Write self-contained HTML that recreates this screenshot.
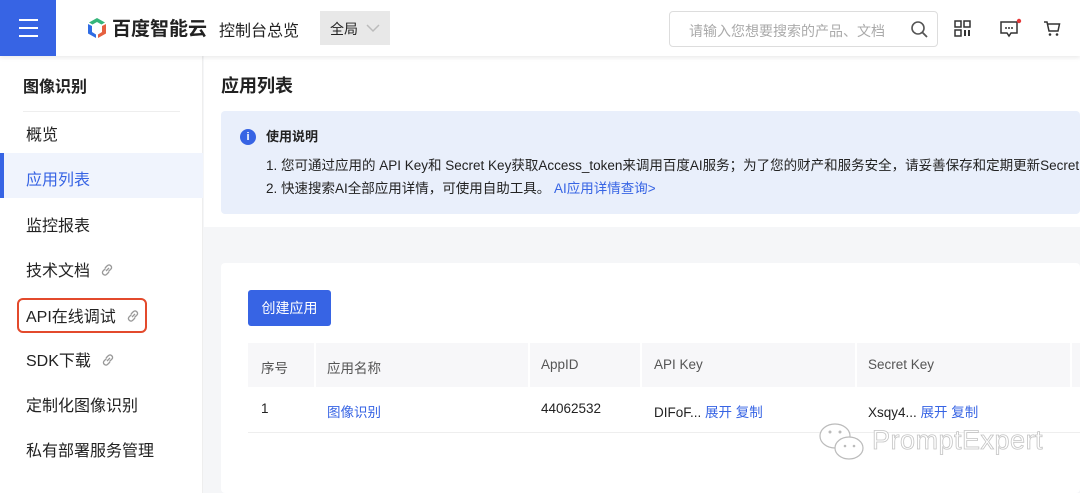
<!DOCTYPE html>
<html><head><meta charset="utf-8"><style>
*{margin:0;padding:0;box-sizing:border-box}
body{width:1080px;height:493px;overflow:hidden;background:#f5f6f8;font-family:"Liberation Sans","Noto Sans CJK SC",sans-serif;color:#222;position:relative}
.abs{position:absolute}
.top{left:0;top:0;width:1080px;height:56px;background:#fff;box-shadow:0 2px 4px rgba(0,0,0,.08);z-index:2}
.burger{left:0;top:0;width:56px;height:56px;background:#3764e4}
.burger i{position:absolute;left:19px;width:19px;height:2px;background:#fff}
.side{left:0;top:56px;width:203px;height:437px;background:#fff;border-right:1px solid #eee}
.side .it{position:absolute;left:26px;font-size:16px;color:#222;white-space:nowrap}
.lk{display:inline-block;margin-left:9px;vertical-align:-2px}
</style></head><body>
<div class="abs top">
 <div class="abs burger"><i style="top:19px"></i><i style="top:27px"></i><i style="top:35px"></i></div>
 <svg class="abs" style="left:85px;top:16px" width="24" height="24" viewBox="0 0 24 24"><path d="M12 2 L20 6.5 L16.5 8.5 L12 6 L7.5 8.5 L4 6.5Z" fill="#35b57a"/><path d="M3 8 L7 10 V16 L11 18.5 V22 L3 17.5Z" fill="#2f6ce4"/><path d="M21 8 L17 10 V16 L13 18.5 V22 L21 17.5Z" fill="#e5603f"/></svg>
 <div class="abs" style="left:112px;top:14px;font-size:19px;font-weight:bold;color:#222">百度智能云</div>
 <div class="abs" style="left:219px;top:17px;font-size:16px;color:#222">控制台总览</div>
 <div class="abs" style="left:320px;top:11px;width:70px;height:34px;background:#e8e8e8"><span class="abs" style="left:10px;top:8px;font-size:14px">全局</span><svg class="abs" style="left:46px;top:12px" width="14" height="10"><path d="M1 2 L7 8 L13 2" stroke="#bbb" fill="none" stroke-width="1.5"/></svg></div>
 <div class="abs" style="left:669px;top:11px;width:269px;height:36px;border:1px solid #ddd;border-radius:4px"><span class="abs" style="left:19px;top:9px;font-size:14px;color:#aaa">请输入您想要搜索的产品、文档</span><svg class="abs" style="left:240px;top:8px" width="20" height="20"><circle cx="8" cy="8" r="6" stroke="#555" fill="none" stroke-width="1.6"/><path d="M12.5 12.5 L17 17" stroke="#555" stroke-width="1.8"/></svg></div>
 <svg class="abs" style="left:954px;top:20px" width="17" height="17"><g fill="none" stroke="#333" stroke-width="1.5"><rect x="1" y="1" width="6" height="6"/><rect x="10" y="1" width="6" height="6"/><rect x="1" y="10" width="6" height="6"/></g><path d="M10 10h2v6h-2zM14 10h2v6h-2z" fill="#333"/></svg>
 <svg class="abs" style="left:999px;top:18px" width="24" height="20"><path d="M2 4 h16 v11 h-6 l-2 3 l-2 -3 h-6z" fill="none" stroke="#333" stroke-width="1.5"/><path d="M6 10h2M9 10h2M12 10h2" stroke="#333" stroke-width="1.4"/><circle cx="20" cy="3" r="2.2" fill="#e5393a"/></svg>
 <svg class="abs" style="left:1043px;top:20px" width="18" height="17"><path d="M1 2 h3 l2 9 h9 l1.5 -7 H5" fill="none" stroke="#333" stroke-width="1.5"/><circle cx="7" cy="14.5" r="1.3" fill="#333"/><circle cx="14" cy="14.5" r="1.3" fill="#333"/></svg>
</div>
<div class="abs side">
 <div class="abs" style="left:23px;top:17px;font-size:16px;font-weight:bold;color:#222">图像识别</div>
 <div class="abs" style="left:23px;top:55px;width:157px;height:1px;background:#eee"></div>
 <div class="it" style="top:65px">概览</div>
 <div class="abs" style="left:0;top:97px;width:203px;height:45px;background:#f0f4fd;border-left:4px solid #3764e4"></div>
 <div class="it" style="top:110px;color:#3764e4">应用列表</div>
 <div class="it" style="top:156px">监控报表</div>
 <div class="it" style="top:201px">技术文档<svg class="lk" width="16" height="16"><g fill="none" stroke="#999" stroke-width="1.3"><path d="M7 9 L10 6"/><path d="M6.5 6.5 L4 9 a2.5 2.5 0 0 0 3.5 3.5 L10 10"/><path d="M9.5 9.5 L12 7 a2.5 2.5 0 0 0 -3.5 -3.5 L6 6"/></g></svg></div>
 <div class="abs" style="left:17px;top:242px;width:130px;height:35px;border:2px solid #e34a2c;border-radius:6px"></div>
 <div class="it" style="top:247px">API在线调试<svg class="lk" width="16" height="16"><g fill="none" stroke="#999" stroke-width="1.3"><path d="M7 9 L10 6"/><path d="M6.5 6.5 L4 9 a2.5 2.5 0 0 0 3.5 3.5 L10 10"/><path d="M9.5 9.5 L12 7 a2.5 2.5 0 0 0 -3.5 -3.5 L6 6"/></g></svg></div>
 <div class="it" style="top:291px">SDK下载<svg class="lk" width="16" height="16"><g fill="none" stroke="#999" stroke-width="1.3"><path d="M7 9 L10 6"/><path d="M6.5 6.5 L4 9 a2.5 2.5 0 0 0 3.5 3.5 L10 10"/><path d="M9.5 9.5 L12 7 a2.5 2.5 0 0 0 -3.5 -3.5 L6 6"/></g></svg></div>
 <div class="it" style="top:336px">定制化图像识别</div>
 <div class="it" style="top:381px">私有部署服务管理</div>
</div>
<div class="abs" style="left:204px;top:56px;width:876px;height:171px;background:#fff"></div>
<div class="abs" style="left:221px;top:72px;font-size:18px;font-weight:bold;color:#222">应用列表</div>
<div class="abs" style="left:221px;top:111px;width:859px;height:103px;background:#e9effb;border-radius:4px">
 <div class="abs" style="left:19px;top:18px;width:16px;height:16px;border-radius:50%;background:#3764e4;color:#fff;font-size:11px;text-align:center;line-height:16px;font-weight:bold">i</div>
 <div class="abs" style="left:45px;top:15px;font-size:13px;font-weight:bold">使用说明</div>
 <div class="abs" style="left:45px;top:43px;font-size:13.5px;white-space:nowrap;color:#222">1. 您可通过应用的 API Key和 Secret Key获取Access_token来调用百度AI服务；为了您的财产和服务安全，请妥善保存和定期更新Secret Key</div>
 <div class="abs" style="left:45px;top:66px;font-size:13.5px;white-space:nowrap;color:#222">2. 快速搜索AI全部应用详情，可使用自助工具。 <span style="color:#3764e4">AI应用详情查询&gt;</span></div>
</div>
<div class="abs" style="left:221px;top:263px;width:859px;height:230px;background:#fff;border-radius:4px"></div>
<div class="abs" style="left:248px;top:290px;width:83px;height:36px;background:#3764e4;border-radius:3px;color:#fff;font-size:14px;text-align:center;line-height:36px">创建应用</div>
<div class="abs" style="left:248px;top:343px;width:832px;height:44px;background:#f7f7f9"></div>
<div class="abs" style="left:314px;top:343px;width:2px;height:44px;background:#fff"></div>
<div class="abs" style="left:528px;top:343px;width:2px;height:44px;background:#fff"></div>
<div class="abs" style="left:640px;top:343px;width:2px;height:44px;background:#fff"></div>
<div class="abs" style="left:855px;top:343px;width:2px;height:44px;background:#fff"></div>
<div class="abs" style="left:1070px;top:343px;width:2px;height:44px;background:#fff"></div>
<div class="abs" style="left:248px;top:432px;width:832px;height:1px;background:#eee"></div>
<div class="abs" style="top:357px;left:261px;font-size:13.5px;color:#555">序号</div>
<div class="abs" style="top:357px;left:327px;font-size:13.5px;color:#555">应用名称</div>
<div class="abs" style="top:357px;left:541px;font-size:13.5px;color:#555">AppID</div>
<div class="abs" style="top:357px;left:654px;font-size:13.5px;color:#555">API Key</div>
<div class="abs" style="top:357px;left:868px;font-size:13.5px;color:#555">Secret Key</div>
<div class="abs" style="top:401px;left:261px;font-size:13.5px">1</div>
<div class="abs" style="top:401px;left:327px;font-size:13.5px;color:#3764e4">图像识别</div>
<div class="abs" style="top:401px;left:541px;font-size:13.5px">44062532</div>
<div class="abs" style="top:401px;left:654px;font-size:13.5px">DIFoF... <span style="color:#3764e4">展开 复制</span></div>
<div class="abs" style="top:401px;left:868px;font-size:13.5px">Xsqy4... <span style="color:#3764e4">展开 复制</span></div>
<svg class="abs" style="left:818px;top:420px" width="50" height="44"><g fill="#fff" stroke="#bbb" stroke-width="1.2"><ellipse cx="17" cy="16" rx="15" ry="12"/><ellipse cx="31" cy="28" rx="14" ry="11"/></g><g fill="#bbb"><circle cx="12" cy="12" r="1.5"/><circle cx="22" cy="12" r="1.5"/><circle cx="27" cy="26" r="1.3"/><circle cx="36" cy="26" r="1.3"/></g></svg>
<div class="abs" style="left:872px;top:425px;font-size:27px;color:#fff;-webkit-text-stroke:0.8px #c4c4c4;letter-spacing:0.5px">PromptExpert</div>
</body></html>
